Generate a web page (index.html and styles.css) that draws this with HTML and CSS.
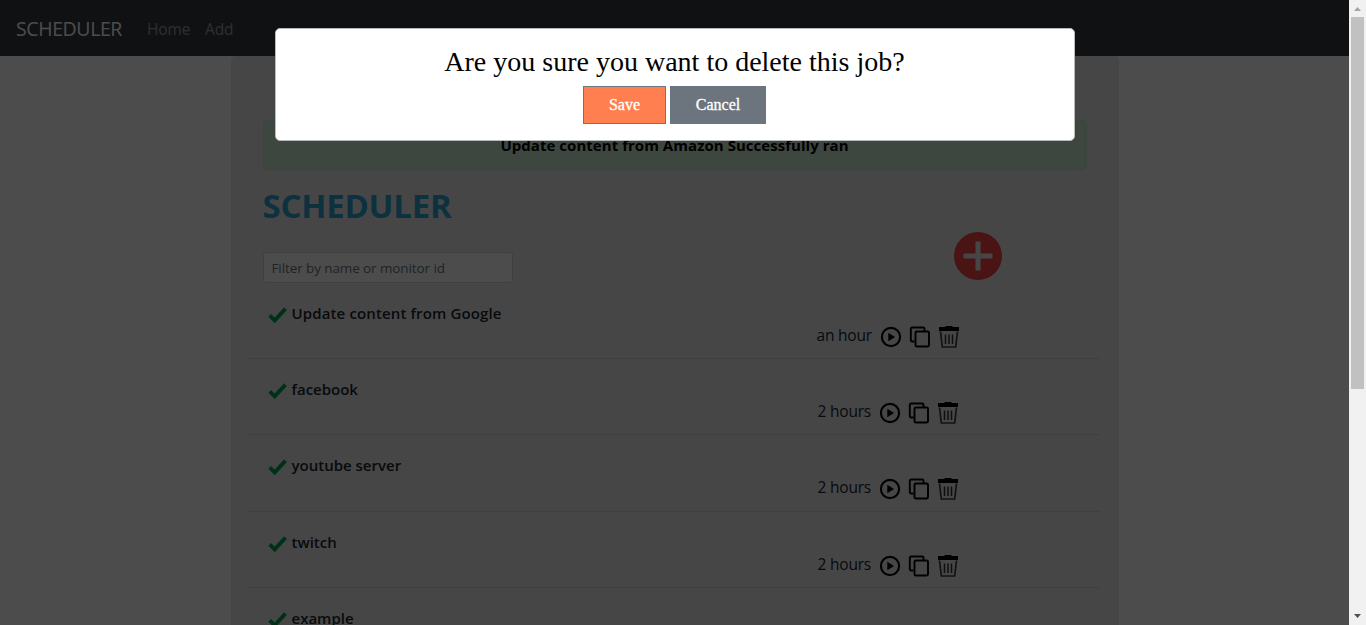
FILE: index.html
```html
<!DOCTYPE html>
<html lang="en">
<head>
<meta charset="utf-8">
<title>Scheduler</title>
<link rel="stylesheet" href="styles.css">
</head>
<body>
<svg class="defs" aria-hidden="true">
  <symbol id="check" viewBox="0 0 20 18"><path d="M1.700 9.400 6.700 14.400 17.500 2.600" fill="none" stroke="#00a651" stroke-width="3.800"/></symbol>
  <symbol id="play" viewBox="0 0 22 22"><circle cx="11" cy="11" r="9.100" fill="none" stroke="#000" stroke-width="2.100"/><path d="M8.300 6.700v8.600l6.700-4.300z"/></symbol>
  <symbol id="copy" viewBox="0 0 22 22"><path d="M5.500 15.500H3A1.200 1.200 0 0 1 1.800 14.300V2.700A1.200 1.200 0 0 1 3 1.500H14.300A1.200 1.200 0 0 1 15.500 2.700V5" fill="none" stroke="#000" stroke-width="1.900"/><rect x="6.500" y="5.500" width="13.500" height="15" rx="1.200" fill="none" stroke="#000" stroke-width="1.900"/></symbol>
  <symbol id="trash" viewBox="0 0 22 22"><path d="M1 1H7.500V0H14.500V1H21V5H1z"/><path d="M2.500 5.500 4.300 21H17.700L19.500 5.500" fill="none" stroke="#3c3c3c" stroke-width="1.700"/><path d="M7.500 8.500V18M11 8.500V18M14.500 8.500V18" stroke="#333" stroke-width="1.500"/></symbol>
</svg>
<div class="window">
  <div class="page">
    <nav class="navbar"><span class="brand">SCHEDULER</span><span class="link home">Home</span><span class="link">Add</span></nav>
    <main class="jumbotron">
      <div class="alert"><span class="alert-text">Update content from Amazon Successfully ran</span></div>
      <h1 class="title">SCHEDULER</h1>
      <div class="tools">
        <input class="filter" placeholder="Filter by name or monitor id">
        <svg class="add" viewBox="0 0 48 48"><circle cx="24" cy="24" r="24" fill="#f44340"/><path d="M24 9.500V38.500M9.500 24H38.500" stroke="#e9ecef" stroke-width="5"/></svg>
      </div>
      <div class="jobs">
        <div class="job"><div class="name"><svg class="check"><use href="#check"/></svg><span class="google">Update content from Google</span></div><div class="actions"><span class="time hour">an hour</span><svg class="icon"><use href="#play"/></svg><svg class="icon"><use href="#copy"/></svg><svg class="icon"><use href="#trash"/></svg></div></div>
        <div class="job"><div class="name"><svg class="check"><use href="#check"/></svg><span>facebook</span></div><div class="actions"><span class="time">2 hours</span><svg class="icon"><use href="#play"/></svg><svg class="icon"><use href="#copy"/></svg><svg class="icon"><use href="#trash"/></svg></div></div>
        <div class="job"><div class="name"><svg class="check"><use href="#check"/></svg><span>youtube server</span></div><div class="actions"><span class="time">2 hours</span><svg class="icon"><use href="#play"/></svg><svg class="icon"><use href="#copy"/></svg><svg class="icon"><use href="#trash"/></svg></div></div>
        <div class="job"><div class="name"><svg class="check"><use href="#check"/></svg><span>twitch</span></div><div class="actions"><span class="time">2 hours</span><svg class="icon"><use href="#play"/></svg><svg class="icon"><use href="#copy"/></svg><svg class="icon"><use href="#trash"/></svg></div></div>
        <div class="job"><div class="name"><svg class="check"><use href="#check"/></svg><span>example</span></div></div>
      </div>
    </main>
    <div class="backdrop">
      <div class="modal">
        <h2 class="question">Are you sure you want to delete this job?</h2>
        <div class="buttons"><button class="btn save">Save</button><button class="btn cancel">Cancel</button></div>
      </div>
    </div>
  </div>
  <div class="scrollbar">
    <svg class="arrow" viewBox="0 0 17 17"><path d="M5 11 8.500 7 12 11z" fill="#a3a3a3"/></svg>
    <div class="thumb"></div>
    <svg class="arrow" viewBox="0 0 17 17"><path d="M5 6 8.500 10 12 6z" fill="#505050"/></svg>
  </div>
</div>
</body>
</html>
```
FILE: styles.css
```css
* { box-sizing: border-box; }
body { margin: 0; overflow: hidden; font-family: "Open Sans", "Noto Sans", sans-serif; font-size: 16px; line-height: 24px; color: #212529; }
.defs { display: none; }
.window { display: flex; height: 625px; }
.page { position: relative; flex: 1; overflow: hidden; background: #fff; }
.navbar { height: 56px; display: flex; align-items: center; padding: 0 16px; background: #343a40; }
.brand { width: 131px; padding-top: 1px; font-size: 19.500px; letter-spacing: -0.400px; color: #fff; }
.link { padding-top: 1px; color: rgba(255, 255, 255, .5); font-size: 15.500px; letter-spacing: -0.100px; }
.home { width: 58px; }
.jumbotron { width: 888px; height: 900px; margin: 0 auto; padding: 64px 32px; background: #e9ecef; border-radius: 5px; }
.alert { height: 50px; padding-top: 12px; text-align: center; background: #d1edd3; border: 1px solid #c3e6cb; border-radius: 4px; }
.alert-text { font-weight: 700; font-size: 15px; letter-spacing: 0.040px; color: #000; }
.title { margin: 16px 0 0; font-size: 33px; line-height: 40px; letter-spacing: -0.250px; font-weight: 700; color: #2fa4d2; }
.tools { display: flex; justify-content: space-between; height: 57px; padding: 6px 85px 0 0; }
.filter { width: 250px; height: 31px; margin-top: 20px; padding: 4px 8px; border: 1px solid #ced4da; border-radius: 3px; background: #fff; font: 13.500px "Open Sans", sans-serif; letter-spacing: -0.100px; }
.filter::placeholder { color: #6c757d; }
.add { width: 48px; height: 48px; }
.jobs { margin: 0 -15px; }
.job { height: 76.200px; margin-right: 2px; padding-top: 18px; border-bottom: 1px solid #d1d4d7; }
.name { display: flex; height: 25px; padding-left: 20px; font-weight: 600; font-size: 15px; }
.google { letter-spacing: 0.130px; }
.check { width: 20px; height: 18px; margin: 5px 4px 0 0; }
.actions { display: flex; padding-left: 570px; }
.time { width: 61px; margin-top: -3px; font-size: 15.500px; letter-spacing: -0.200px; }
.hour { width: 62px; margin-left: -1px; padding-right: 0; flex: 0 0 63px; }
.icon { width: 22px; height: 22px; margin-right: 7px; }
.backdrop { position: absolute; inset: 0; background: rgba(0, 0, 0, .7); padding-top: 28px; }
.modal { width: 800px; height: 113px; margin: 0 auto; padding-top: 17px; background: #fff; border: 1px solid #bbb; border-radius: 5px; text-align: center; font-family: "Liberation Serif", serif; color: #000; }
.question { margin: 0 0 8px; font-size: 28px; line-height: 32px; font-weight: 400; }
.buttons { display: flex; justify-content: center; gap: 4px; }
.btn { height: 38px; padding: 0; border: 1px solid #6c757d; color: #fff; font: 16px "Liberation Serif", serif; -webkit-text-stroke: 0.300px #fff; }
.save { width: 83px; background: #ff7f50; }
.cancel { width: 96px; background: #6c757d; }
.scrollbar { display: flex; flex-direction: column; width: 17px; background: #f1f1f1; }
.arrow { width: 17px; height: 17px; }
.thumb { height: 372px; margin: 0 2px 219px; background: #c1c1c1; }
```
